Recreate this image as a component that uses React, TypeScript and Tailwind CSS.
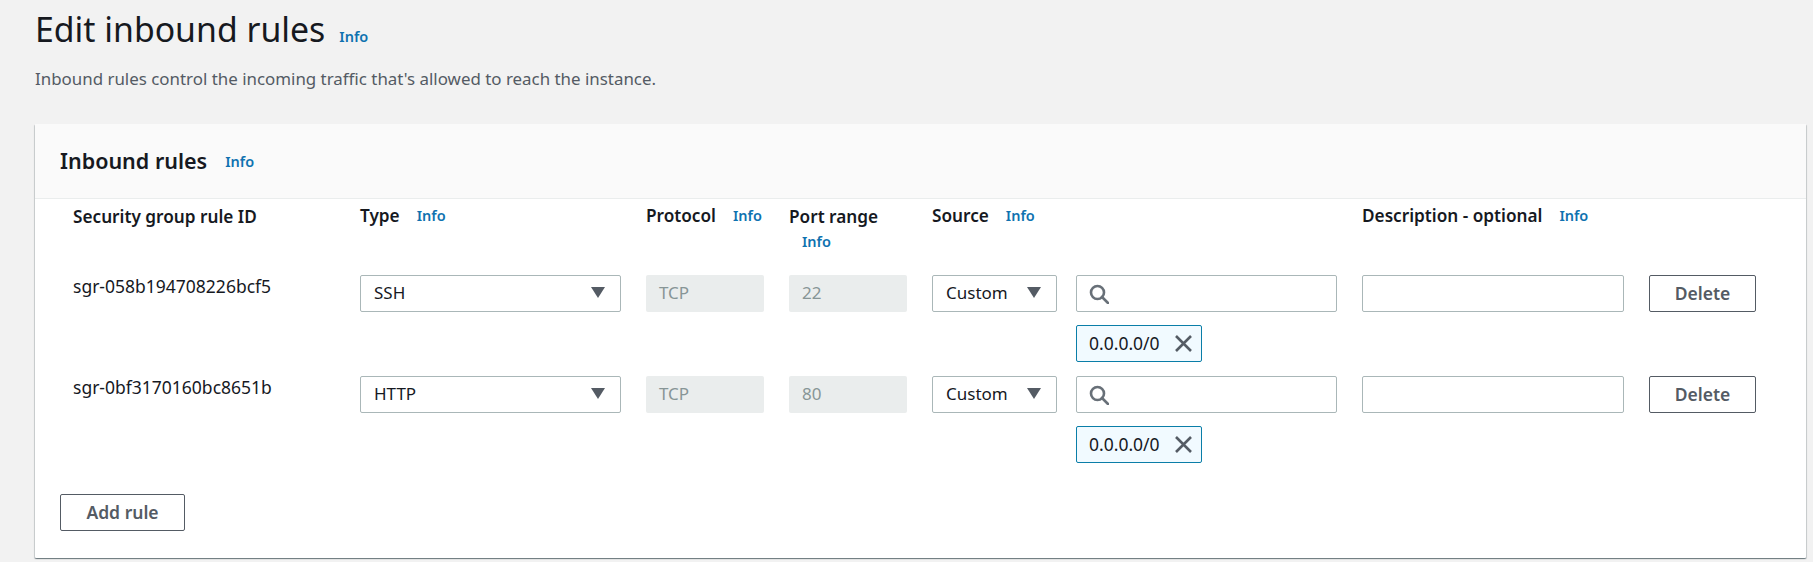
const rules = [
  { id: "sgr-058b194708226bcf5", type: "SSH", port: "22" },
  { id: "sgr-0bf3170160bc8651b", type: "HTTP", port: "80" },
];

function Info({ className = "" }: { className?: string }) {
  return <a className={"text-[14.5px] leading-[20px] font-semibold text-[#0f72b0] " + className}>Info</a>;
}

function Caret() {
  return (
    <svg width="14" height="11" viewBox="0 0 14 11" className="shrink-0">
      <path d="M0 0h14L7 11z" fill="#545b64" />
    </svg>
  );
}

function SearchIcon() {
  return (
    <svg width="20" height="20" viewBox="0 0 20 20" fill="none" stroke="#687078" strokeWidth="2.6" className="shrink-0">
      <circle cx="8.5" cy="8.5" r="6.5" />
      <path d="M13 13l6 6" strokeLinecap="round" />
    </svg>
  );
}

function CloseIcon() {
  return (
    <svg width="17" height="17" viewBox="0 0 17 17" fill="none" stroke="#545b64" strokeWidth="2.6">
      <path d="M1 1l15 15M16 1L1 16" />
    </svg>
  );
}

function Head({ children }: { children: React.ReactNode }) {
  return <span className="font-semibold text-[17.2px] leading-[22px] text-[#16191f]">{children}</span>;
}

function Select({ label, width }: { label: string; width: string }) {
  return (
    <div className={"flex h-[37px] items-center justify-between rounded-[2px] border border-[#aab7b8] bg-white pl-[13px] pr-[15px] pb-[2px] text-[17px] text-[#16191f] " + width}>
      <span>{label}</span>
      <Caret />
    </div>
  );
}

function Disabled({ value }: { value: string }) {
  return (
    <div className="flex h-[37px] w-[118px] items-center rounded-[2px] bg-[#eaeded] pl-[13px] pb-[2px] text-[17px] text-[#879596]">
      {value}
    </div>
  );
}

function Button({ label, width }: { label: string; width: string }) {
  return (
    <button className={"h-[37px] rounded-[2px] border border-[#545b64] bg-white pb-[1px] text-[17.5px] font-semibold text-[#545b64] " + width}>
      {label}
    </button>
  );
}

export default function App() {
  return (
    <div className="h-[562px] overflow-hidden bg-[#f2f2f2] pl-[35px] pr-[7px] font-['Noto_Sans',sans-serif]">
      <div className="flex h-[51px] items-end">
        <h1 className="text-[33.8px] leading-[44px] font-normal text-[#16191f]">Edit inbound rules</h1>
        <Info className="ml-[14px] pb-[5px]" />
      </div>
      <p className="mt-[16px] text-[16.9px] leading-[24px] text-[#545b64]">
        Inbound rules control the incoming traffic that's allowed to reach the instance.
      </p>

      <section className="mt-[33px] h-[434px] rounded-[1px] bg-white shadow-[0_1px_1px_0_rgba(0,28,36,0.4),1px_1px_1px_0_rgba(0,28,36,0.15),-1px_1px_1px_0_rgba(0,28,36,0.15)]">
        <div className="flex h-[75px] items-center border-b border-[#eaeded] bg-[#fafafa] pl-[25px]">
          <h2 className="text-[21.5px] font-semibold leading-[24px] text-[#16191f]">Inbound rules</h2>
          <Info className="ml-[18px]" />
        </div>

        <div className="grid grid-cols-[287px_286px_143px_143px_144px_286px_287px_1fr] pl-[38px] pt-[6px]">
          <div><Head>Security group rule ID</Head></div>
          <div className="flex gap-[17px]"><Head>Type</Head><Info /></div>
          <div className="flex gap-[17px]"><Head>Protocol</Head><Info /></div>
          <div className="w-[118px]">
            <Head>Port range</Head>
            <div className="pl-[13px]"><Info /></div>
          </div>
          <div className="flex gap-[17px]"><Head>Source</Head><Info /></div>
          <div />
          <div className="col-span-2 flex gap-[17px]"><Head>Description - optional</Head><Info /></div>
        </div>

        <div className="mt-[22px] flex flex-col gap-[14px]">
          {rules.map((rule) => (
            <div key={rule.id} className="grid grid-cols-[287px_286px_143px_143px_144px_286px_287px_1fr] pl-[38px]">
              <div className="text-[17.5px] leading-[22px] text-[#16191f]">{rule.id}</div>
              <Select label={rule.type} width="w-[261px]" />
              <Disabled value="TCP" />
              <Disabled value={rule.port} />
              <Select label="Custom" width="w-[125px]" />
              <div className="flex w-[261px] flex-col">
                <div className="flex h-[37px] items-center rounded-[2px] border border-[#aab7b8] bg-white pl-[12px]">
                  <SearchIcon />
                </div>
                <div className="mt-[13px] flex h-[37px] w-[126px] items-center justify-between rounded-[2px] border border-[#0a7ea8] bg-[#f1faff] pl-[12px] pr-[9px] text-[17.5px] text-[#16191f]">
                  <span>0.0.0.0/0</span>
                  <CloseIcon />
                </div>
              </div>
              <div className="h-[37px] w-[262px] rounded-[2px] border border-[#aab7b8] bg-white" />
              <Button label="Delete" width="w-[107px]" />
            </div>
          ))}
        </div>

        <div className="mt-[31px] pl-[25px]">
          <Button label="Add rule" width="w-[125px]" />
        </div>
      </section>
    </div>
  );
}
